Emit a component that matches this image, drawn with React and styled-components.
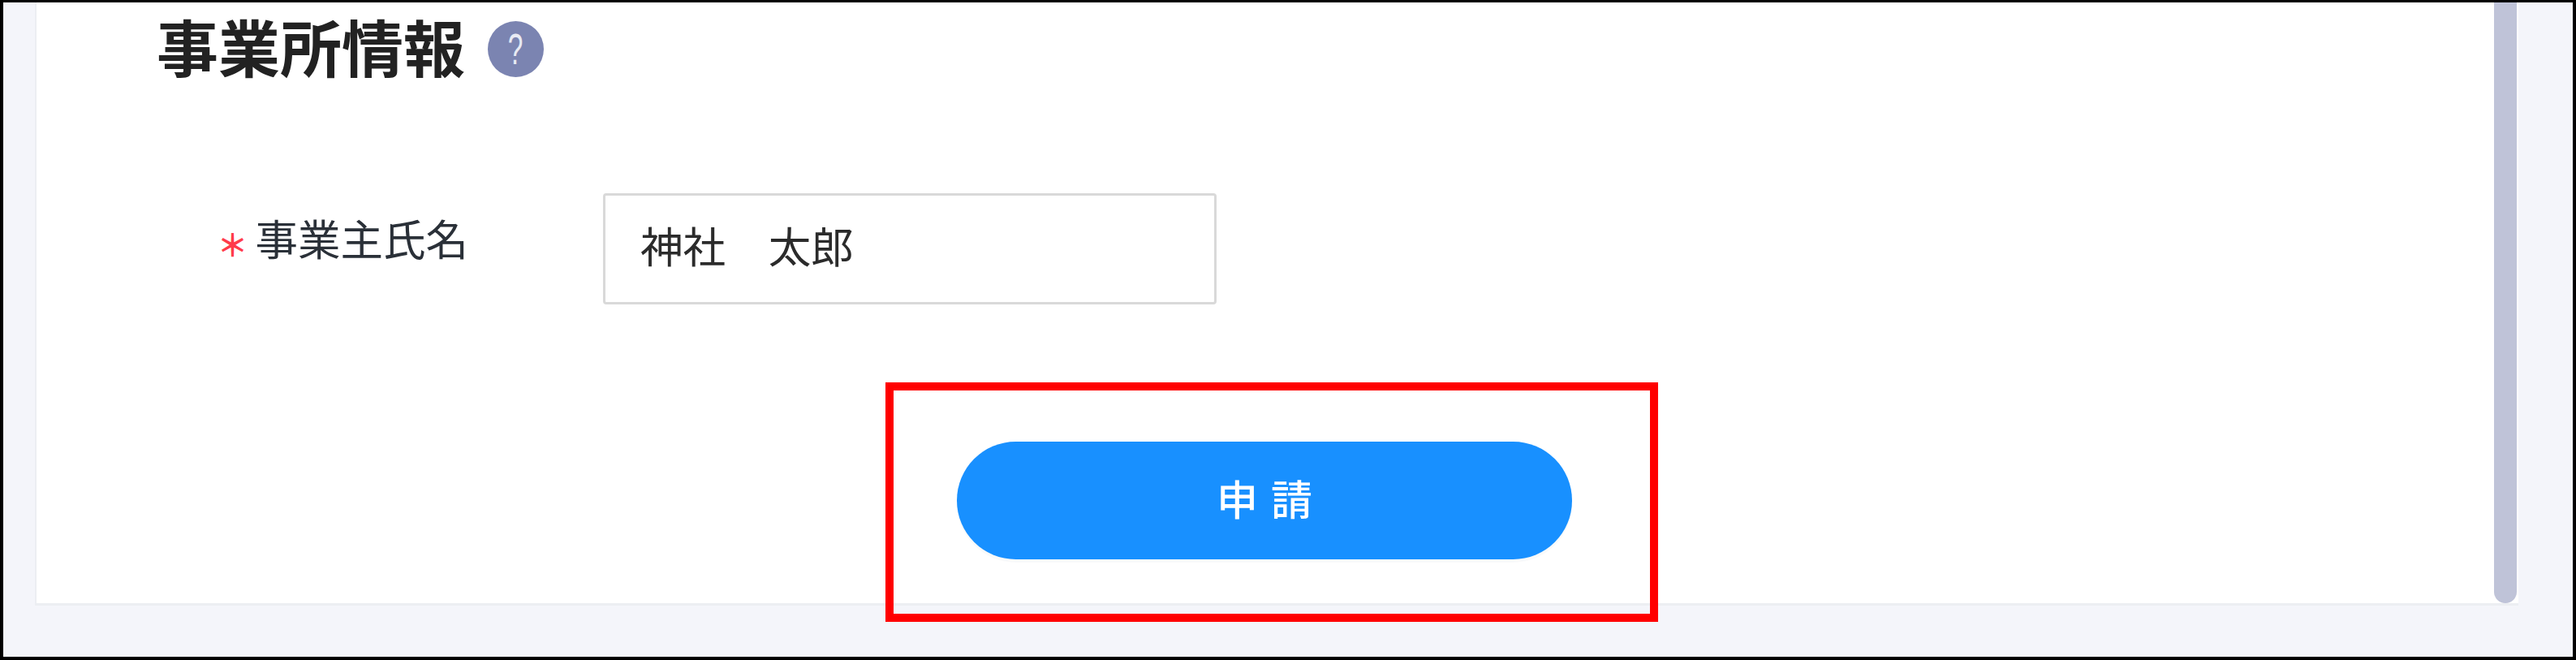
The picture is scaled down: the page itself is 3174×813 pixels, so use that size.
import React from "react";
import styled, { createGlobalStyle } from "styled-components";

const GlobalStyle = createGlobalStyle`
  html, body {
    margin: 0;
    padding: 0;
    background: #fff;
  }
  * {
    box-sizing: border-box;
  }
`;

const Frame = styled.div`
  width: 3174px;
  height: 813px;
  border: solid #000;
  border-width: 3px 4px 4px 4px;
  background: #f4f5fa;
  padding-left: 39px;
  font-family: "Noto Sans CJK JP", "Liberation Sans", sans-serif;
  overflow: hidden;
`;

const Panel = styled.section`
  position: relative;
  width: 3060px;
  height: 743px;
  background: #fff;
  border: solid #eceef2;
  border-width: 0 0 3px 2px;
  padding: 15px 0 0 148px;
`;

const Scrollbar = styled.div`
  position: absolute;
  top: 0;
  right: 2px;
  bottom: 0;
  width: 28px;
  background: #bfc3d8;
  border-radius: 0 0 14px 14px;
`;

const TitleRow = styled.div`
  display: flex;
  align-items: center;
  gap: 28px;
`;

const Title = styled.h2`
  margin: 0;
  font-size: 76px;
  line-height: 77px;
  font-weight: 700;
  color: #222;
`;

const HelpIcon = styled.span`
  display: flex;
  align-items: center;
  justify-content: center;
  width: 69px;
  height: 69px;
  margin-top: 7px;
  border-radius: 50%;
  background: #7b84b1;
`;

const HelpGlyph = styled.span`
  display: block;
  color: #e8eaf3;
  font-size: 54px;
  line-height: 1;
  font-family: "Liberation Sans", sans-serif;
  transform: scaleX(0.62);
`;

const FormRow = styled.div`
  display: grid;
  grid-template-columns: 379px 756px;
  column-gap: 166px;
  margin: 143px 0 0 0;
  padding-left: 5px;
`;

const Label = styled.label`
  display: flex;
  justify-content: flex-end;
  align-items: flex-start;
  gap: 9px;
  height: 137px;
  padding-top: 20px;
  font-size: 52.5px;
  line-height: 68px;
  color: #2a3038;
`;

const Required = styled.span`
  font-size: 38px;
  font-weight: 700;
  color: #ff3b4a;
  line-height: 84px;
`;

const TextInput = styled.input`
  width: 100%;
  height: 137px;
  border: 3px solid #d9d9d9;
  border-radius: 4px;
  padding: 0 0 11px 43px;
  font-family: inherit;
  font-size: 52.6px;
  color: #2b2b2b;
  background: #fff;
  outline: none;
`;

const ButtonRow = styled.div`
  position: relative;
  width: 758px;
  margin: 169px 0 0 986px;
`;

const SubmitButton = styled.button`
  display: block;
  width: 100%;
  height: 145px;
  padding: 0 0 8px;
  border: none;
  border-radius: 73px;
  background: #1890ff;
  box-shadow: 0 4px 0 rgba(0, 0, 0, 0.02);
  color: #fff;
  font-family: inherit;
  font-size: 51px;
  font-weight: 500;
  letter-spacing: 16px;
  text-indent: 16px;
  cursor: pointer;
`;

const Annotation = styled.div`
  position: absolute;
  left: -88px;
  top: -73px;
  width: 952px;
  height: 295px;
  border: 10px solid #f00;
  pointer-events: none;
`;

export default function App() {
  return (
    <>
      <GlobalStyle />
      <Frame>
        <Panel>
          <TitleRow>
            <Title>事業所情報</Title>
            <HelpIcon>
              <HelpGlyph>?</HelpGlyph>
            </HelpIcon>
          </TitleRow>
          <FormRow>
            <Label>
              <Required>＊</Required>
              事業主氏名
            </Label>
            <TextInput readOnly value="神社　太郎" />
          </FormRow>
          <ButtonRow>
            <SubmitButton>申請</SubmitButton>
            <Annotation />
          </ButtonRow>
          <Scrollbar />
        </Panel>
      </Frame>
    </>
  );
}
